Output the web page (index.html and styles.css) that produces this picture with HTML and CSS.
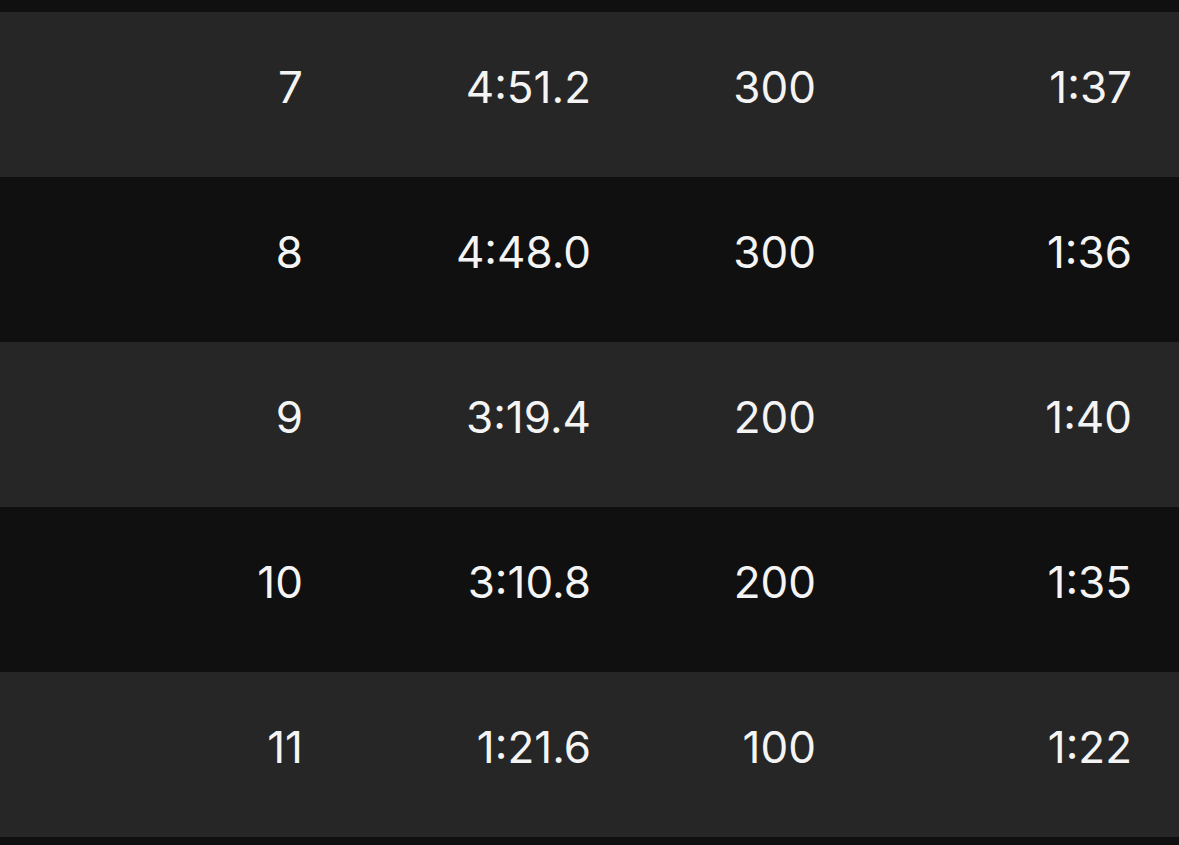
FILE: index.html
```html
<!DOCTYPE html>
<html>
<head>
<meta charset="utf-8">
<link rel="stylesheet" href="styles.css">
</head>
<body>
<div class="table">
  <div class="row light"><span>7</span><span>4:51.2</span><span>300</span><span>1:37</span></div>
  <div class="row dark"><span>8</span><span>4:48.0</span><span>300</span><span>1:36</span></div>
  <div class="row light"><span>9</span><span>3:19.4</span><span>200</span><span>1:40</span></div>
  <div class="row dark"><span>10</span><span>3:10.8</span><span>200</span><span>1:35</span></div>
  <div class="row light"><span>11</span><span>1:21.6</span><span>100</span><span>1:22</span></div>
</div>
</body>
</html>
```
FILE: styles.css
```css
html, body {
  margin: 0;
  padding: 0;
  background: #101010;
}
body {
  font-family: Inter, "Noto Sans", sans-serif;
  color: #f4f4f4;
  width: 1179px;
  height: 845px;
  overflow: hidden;
}
.table {
  padding-top: 12px;
}
.row {
  height: 165px;
  box-sizing: border-box;
  display: grid;
  grid-template-columns: 303px 288px 225px 316px;
  align-items: center;
  padding-bottom: 16px;
  font-size: 44px;
  font-weight: 400;
}
.row span {
  text-align: right;
}
.light {
  background: #262626;
}
.dark {
  background: #101010;
}
```
